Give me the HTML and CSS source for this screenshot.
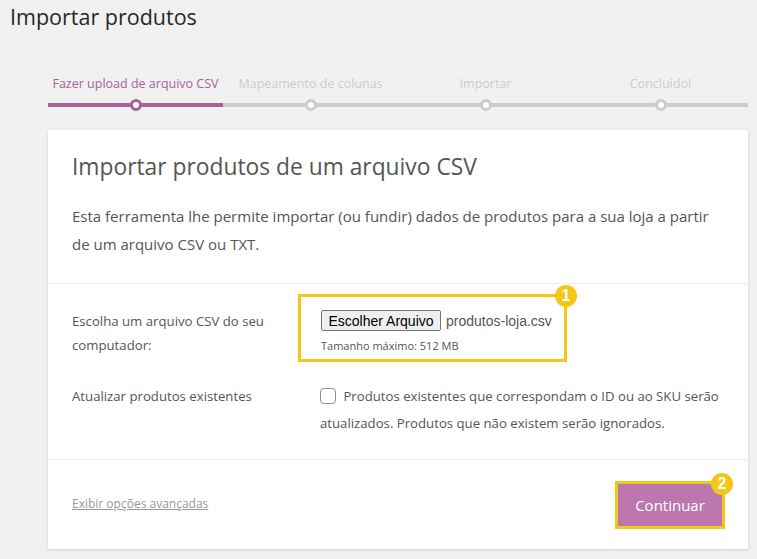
FILE: index.html
```html
<!DOCTYPE html>
<html lang="pt-BR">

<head>
    <meta charset="UTF-8">
    <title>Importar produtos</title>
    <link rel="stylesheet" href="styles.css">
</head>

<body>
    <div class="wrap">
        <h1 class="page-title">Importar produtos</h1>

        <ol class="steps">
            <li class="step active">Fazer upload de arquivo CSV</li>
            <li class="step">Mapeamento de colunas</li>
            <li class="step">Importar</li>
            <li class="step">Concluído!</li>
        </ol>

        <div class="card">
            <header class="card-head">
                <h2>Importar produtos de um arquivo CSV</h2>
                <p>Esta ferramenta lhe permite importar (ou fundir) dados de produtos para a sua loja a partir de um arquivo CSV ou TXT.</p>
            </header>

            <section class="card-form">
                <div class="row">
                    <label class="row-label" for="upload">Escolha um arquivo CSV do seu computador:</label>
                    <div class="row-field">
                        <div class="highlight">
                            <div class="file-line">
                                <button class="file-btn" id="upload">Escolher Arquivo</button>
                                <span class="file-name">produtos-loja.csv</span>
                            </div>
                            <small class="file-hint">Tamanho máximo: 512 MB</small>
                            <span class="badge">1</span>
                        </div>
                    </div>
                </div>

                <div class="row second">
                    <label class="row-label" for="update">Atualizar produtos existentes</label>
                    <div class="row-field check-text">
                        <input type="checkbox" id="update" class="check">
                        Produtos existentes que correspondam o ID ou ao SKU serão atualizados. Produtos que não existem serão ignorados.
                    </div>
                </div>
            </section>

            <footer class="card-foot">
                <a href="#" class="advanced">Exibir opções avançadas</a>
                <div class="highlight btn-wrap">
                    <button class="continue">Continuar</button>
                    <span class="badge">2</span>
                </div>
            </footer>
        </div>
    </div>
</body>

</html>
```

FILE: styles.css
```css
body {
    margin: 0;
    background-color: #f1f1f1;
    font-family: "Open Sans", "Noto Sans", sans-serif;
    color: #555;
}

.wrap {
    padding: 0 9px 10px 10px;
}

.page-title {
    margin: 0;
    padding-top: 2px;
    font-size: 21.5px;
    line-height: 30px;
    font-weight: 400;
    color: #23282d;
}

.steps {
    list-style: none;
    margin: 43px 0 0 38px;
    padding: 0;
    width: 700px;
    display: grid;
    grid-template-columns: repeat(4, 1fr);
}

.step {
    position: relative;
    text-align: center;
    font-size: 12.5px;
    line-height: 18px;
    color: #ccc;
    padding-bottom: 10px;
    border-bottom: 4px solid #ccc;
}

.step::after {
    content: "";
    position: absolute;
    left: 50%;
    bottom: -8px;
    width: 6px;
    height: 6px;
    margin-left: -6px;
    border: 3px solid #ccc;
    border-radius: 50%;
    background-color: #fff;
}

.step.active {
    color: #a46497;
    border-bottom-color: #a46497;
}

.step.active::after {
    border-color: #a46497;
}

.card {
    margin: 23px 0 0 38px;
    width: 700px;
    background-color: #fff;
    box-shadow: 0 1px 3px rgba(0, 0, 0, 0.13);
}

.card-head {
    padding: 22px 24px 25px;
    border-bottom: 1px solid #eee;
}

.card-head h2 {
    margin: 0 0 20px;
    font-size: 22.8px;
    line-height: 30px;
    font-weight: 400;
    color: #555;
}

.card-head p {
    margin: 0;
    font-size: 15px;
    line-height: 28px;
}

.card-form {
    padding: 10px 24px 22px;
    border-bottom: 1px solid #eee;
}

.row {
    display: grid;
    grid-template-columns: 248px 1fr;
}

.row.second {
    margin-top: 21px;
}

.row-label {
    font-size: 13.2px;
    line-height: 24px;
    padding: 15px 20px 0 0;
}

.row.second .row-label {
    padding-top: 1px;
}

.highlight {
    position: relative;
    display: inline-block;
    border: 3px solid #f5c518;
}

.row-field .highlight {
    margin-left: -22px;
    padding: 13px 12px 5px 20px;
}

.file-line {
    display: flex;
    align-items: center;
    gap: 5px;
}

.file-btn {
    font-family: "Liberation Sans", Arial, sans-serif;
    font-size: 14px;
    height: 21px;
    width: 120px;
    padding: 0;
    color: #000;
    background-color: #efefef;
    border: 1px solid #767676;
    border-radius: 2px;
}

.file-name {
    font-family: "Liberation Sans", Arial, sans-serif;
    font-size: 14px;
    color: #555;
}

.file-hint {
    display: block;
    margin-top: 7px;
    font-size: 11px;
    line-height: 16px;
    color: #555;
}

.badge {
    position: absolute;
    top: -12px;
    right: -13px;
    width: 22px;
    height: 22px;
    border-radius: 50%;
    background-color: #f5c518;
    color: #fff;
    font-family: "Liberation Sans", Arial, sans-serif;
    font-weight: 700;
    font-size: 16px;
    line-height: 22px;
    text-align: center;
}

.check-text {
    font-size: 13.2px;
    line-height: 27px;
}

.check {
    appearance: none;
    width: 16px;
    height: 16px;
    margin: 0 4px 0 0;
    vertical-align: -3px;
    border: 1px solid #8c8f94;
    border-radius: 4px;
    background-color: #fff;
}

.card-foot {
    display: flex;
    justify-content: space-between;
    align-items: center;
    padding: 21px 23px 20px 24px;
}

.advanced {
    font-size: 12px;
    color: #999;
    text-decoration: underline;
    margin-top: -3px;
}

.btn-wrap {
    display: block;
}

.btn-wrap .badge {
    top: -11px;
    right: -11px;
}

.continue {
    display: block;
    width: 104px;
    height: 42px;
    padding: 0;
    border: none;
    background-color: #bb77ae;
    color: #fff;
    font-family: "Open Sans", "Noto Sans", sans-serif;
    font-size: 15px;
}
```
